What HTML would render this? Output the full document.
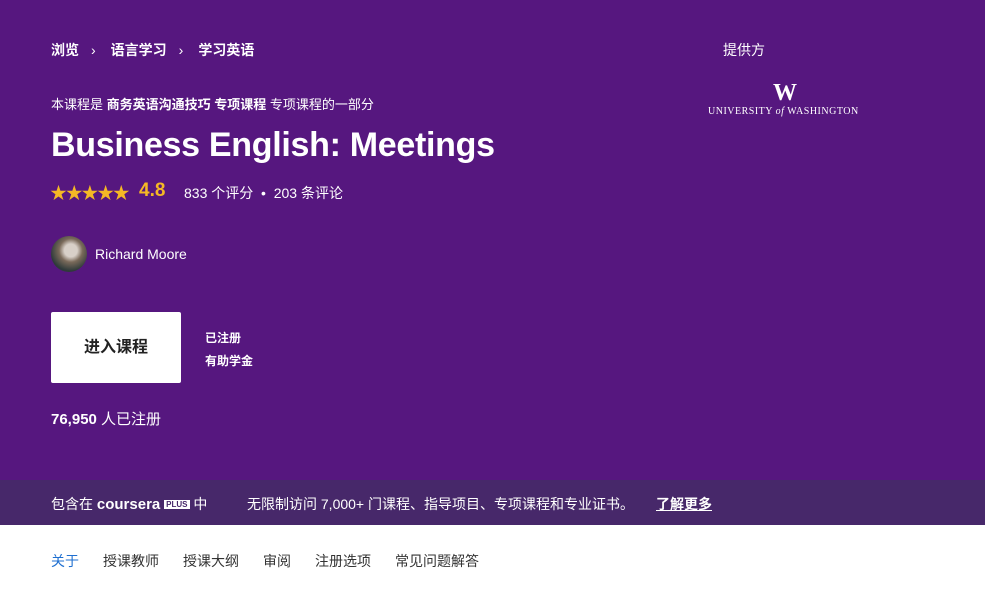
<!DOCTYPE html>
<html><head><meta charset="utf-8"><style>
*{margin:0;padding:0;box-sizing:border-box}
body{width:985px;height:594px;overflow:hidden;background:#fff;font-family:"Liberation Sans","Noto Sans CJK SC",sans-serif;color:#fff;position:relative}
.hero{position:absolute;left:0;top:0;width:985px;height:480px;background:#56177f}
.band{position:absolute;left:0;top:480px;width:985px;height:45px;background:#47286a;font-size:14px}
.a{position:absolute;white-space:nowrap}
.nav{position:absolute;top:551px;font-size:14px;color:#333}
</style></head><body>
<div class="hero">
 <div class="a" style="left:51px;top:40px;font-size:14px;font-weight:bold">浏览<span style="font-weight:normal;margin:0 15px 0 12px">›</span>语言学习<span style="font-weight:normal;margin:0 15px 0 12px">›</span>学习英语</div>
 <div class="a" style="left:723px;top:40px;font-size:14px">提供方</div>
 <div class="a" style="left:773px;top:80px;font-family:'Liberation Serif',serif;font-weight:bold;font-size:24px">W</div>
 <div class="a" style="left:708px;top:106px;font-family:'Liberation Serif',serif;font-size:10px;letter-spacing:0.5px">UNIVERSITY <i>of</i> WASHINGTON</div>
 <div class="a" style="left:51px;top:94px;font-size:13px">本课程是 <b>商务英语沟通技巧 专项课程</b> 专项课程的一部分</div>
 <div class="a" style="left:51px;top:126px;font-size:34px;font-weight:bold;letter-spacing:-0.3px">Business English: Meetings</div>
 <div class="a" style="left:50px;top:179px;font-size:17px;color:#f5b825;letter-spacing:-1.3px">★★★★★</div>
 <div class="a" style="left:139px;top:180px;font-size:19px;font-weight:bold;color:#f5b825">4.8</div>
 <div class="a" style="left:184px;top:183px;font-size:14px">833 个评分 &nbsp;•&nbsp; 203 条评论</div>
 <div class="a" style="left:51px;top:236px;width:36px;height:36px;border-radius:50%;background:radial-gradient(circle at 55% 40%,#d8d0c8 0 22%,#7a6a5a 40%,#2e3a3a 70%)"></div>
 <div class="a" style="left:95px;top:246px;font-size:14px">Richard Moore</div>
 <div class="a" style="left:51px;top:312px;width:130px;height:71px;background:#fff;border-radius:2px;color:#222;font-size:16px;font-weight:bold;text-align:center;line-height:71px">进入课程</div>
 <div class="a" style="left:205px;top:329px;font-size:12px;font-weight:bold">已注册</div>
 <div class="a" style="left:205px;top:352px;font-size:12px;font-weight:bold">有助学金</div>
 <div class="a" style="left:51px;top:408px;font-size:15px"><b>76,950</b> 人已注册</div>
</div>
<div class="band">
 <div class="a" style="left:51px;top:14px">包含在 <b style="font-size:15px">coursera</b> <span style="background:#fff;color:#47286a;font-size:8px;font-weight:bold;padding:0 2px;vertical-align:2px">PLUS</span> 中</div>
 <div class="a" style="left:247px;top:14px">无限制访问 7,000+ 门课程、指导项目、专项课程和专业证书。</div>
 <div class="a" style="left:656px;top:14px;font-weight:bold;text-decoration:underline">了解更多</div>
</div>
<div class="nav" style="left:51px;color:#1f6fd0">关于</div>
<div class="nav" style="left:103px">授课教师</div>
<div class="nav" style="left:183px">授课大纲</div>
<div class="nav" style="left:263px">审阅</div>
<div class="nav" style="left:315px">注册选项</div>
<div class="nav" style="left:395px">常见问题解答</div>
</body></html>
